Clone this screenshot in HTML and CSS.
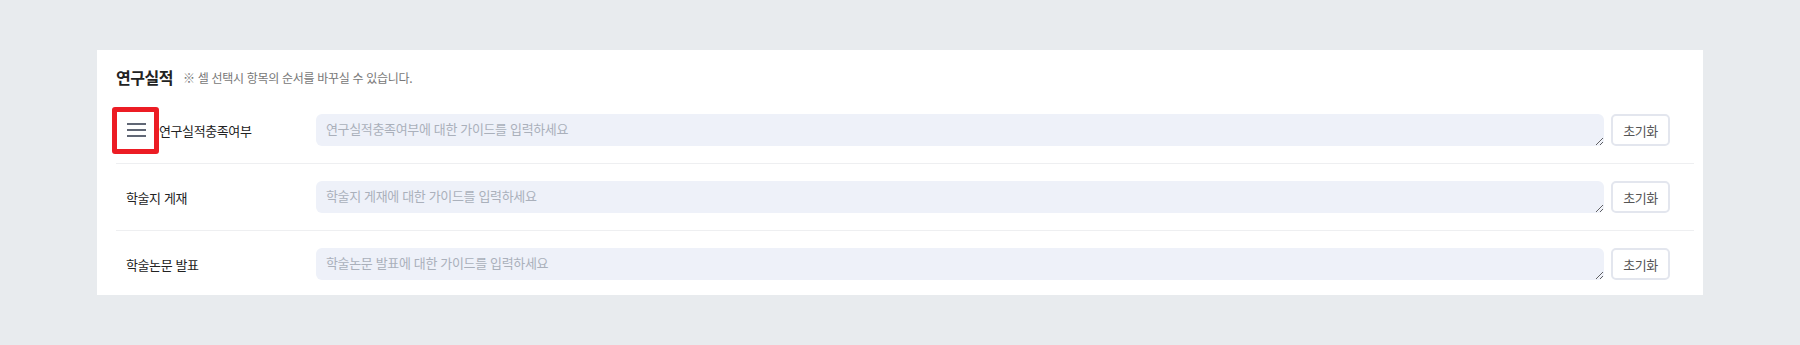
FILE: index.html
```html
<!DOCTYPE html>
<html lang="ko">
<head>
  <meta charset="utf-8" />
  <meta name="viewport" content="width=device-width, initial-scale=1" />
  <title>연구실적 가이드 설정</title>
  <link rel="stylesheet" href="styles.css">
</head>
<body>
  <div class="panel">
    <div class="panel-head">
      <h2>연구실적</h2>
      <span class="note">※ 셀 선택시 항목의 순서를 바꾸실 수 있습니다.</span>
    </div>

    <ul class="guide-list">
      <li class="guide-row">
        <div class="guide-label">
          <span class="drag-handle">
            <svg width="19" height="14" viewBox="0 0 19 14">
              <path d="M0 1H19M0 7H19M0 13H19" stroke="#606775" stroke-width="2" />
            </svg>
            <span class="highlight"></span>
          </span>
          연구실적충족여부
        </div>
        <textarea class="guide-input" placeholder="연구실적충족여부에 대한 가이드를 입력하세요"></textarea>
        <button class="btn-reset">초기화</button>
      </li>
      <li class="guide-row">
        <div class="guide-label">학술지 게재</div>
        <textarea class="guide-input" placeholder="학술지 게재에 대한 가이드를 입력하세요"></textarea>
        <button class="btn-reset">초기화</button>
      </li>
      <li class="guide-row">
        <div class="guide-label">학술논문 발표</div>
        <textarea class="guide-input" placeholder="학술논문 발표에 대한 가이드를 입력하세요"></textarea>
        <button class="btn-reset">초기화</button>
      </li>
    </ul>
  </div>
</body>
</html>
```

FILE: styles.css
```css
body {
  font-family: "Noto Sans CJK KR", "Noto Sans", sans-serif;
  margin: 0;
  padding: 50px 97px;
  background-color: #e8ebee;
  color: #222;
}
.panel {
  background-color: #fff;
  padding: 16px 9px 0 19px;
}
.panel-head {
  display: flex;
  align-items: center;
  height: 22px;
}
.panel-head h2 {
  margin: 0;
  font-size: 16px;
  font-weight: 700;
  letter-spacing: -0.5px;
  color: #222;
}
.note {
  margin-left: 10px;
  font-size: 12px;
  letter-spacing: -0.3px;
  color: #777;
}
.guide-list {
  list-style: none;
  margin: 9px 0 0;
  padding: 0;
}
.guide-row {
  display: flex;
  align-items: center;
  padding: 17px 24px 17px 10px;
  border-bottom: 1px solid #eeeff1;
}
.guide-row:last-child {
  border-bottom: none;
  padding-bottom: 15px;
}
.guide-label {
  display: flex;
  align-items: center;
  width: 190px;
  flex-shrink: 0;
  font-size: 13px;
  letter-spacing: -0.4px;
  color: #222;
}
.drag-handle {
  position: relative;
  display: flex;
  align-items: center;
  width: 33px;
  height: 32px;
  padding-left: 1px;
  box-sizing: border-box;
}
.highlight {
  position: absolute;
  left: -14px;
  top: -7px;
  width: 47px;
  height: 47px;
  box-sizing: border-box;
  border: 5px solid #ec1c24;
  border-radius: 3px;
}
.guide-input {
  flex: 1;
  height: 32px;
  box-sizing: border-box;
  margin: 0;
  padding: 5px 10px 7px;
  border: none;
  border-radius: 6px;
  background-color: #eef1f9;
  font-family: inherit;
  font-size: 13px;
  letter-spacing: -0.35px;
  line-height: 20px;
  color: #333;
  resize: vertical;
  outline: none;
}
.guide-input::placeholder {
  color: #aab0bb;
}
.btn-reset {
  width: 59px;
  height: 32px;
  margin-left: 7px;
  padding: 0;
  background-color: #fff;
  border: 2px solid #e3e6ee;
  border-radius: 5px;
  font-family: inherit;
  font-size: 13px;
  letter-spacing: -0.4px;
  color: #555;
  cursor: pointer;
}
```
